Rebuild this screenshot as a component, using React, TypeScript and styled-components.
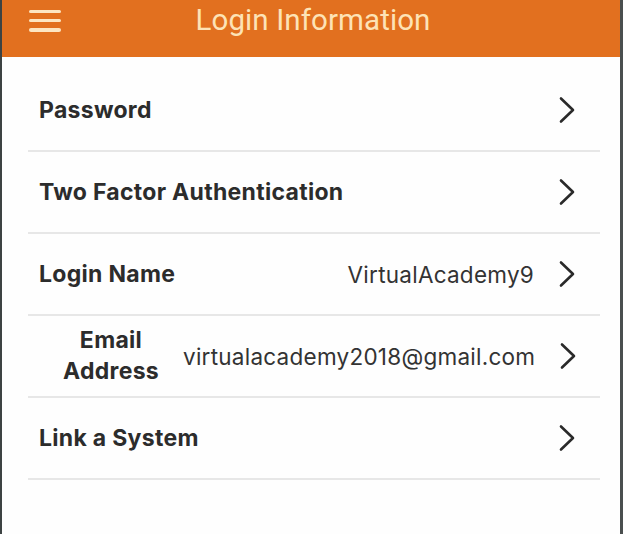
import React from 'react';
import styled, { createGlobalStyle } from 'styled-components';

const GlobalStyle = createGlobalStyle`
  html, body {
    margin: 0;
    padding: 0;
    background: #ffffff;
  }
  body {
    font-family: Inter, "Liberation Sans", Arial, sans-serif;
  }
`;

const Screen = styled.div`
  width: 623px;
  height: 534px;
  box-sizing: border-box;
  border-left: 2px solid #3d4343;
  border-right: 3px solid #4a4f4f;
  background: #fefefe;
  display: flex;
  flex-direction: column;
`;

const Header = styled.header`
  height: 57px;
  flex-shrink: 0;
  background: #e2701f;
  display: grid;
  grid-template-columns: 1fr auto 1fr;
  align-items: center;
`;

const MenuButton = styled.button`
  justify-self: start;
  margin: 0 0 16px 27px;
  padding: 0;
  border: none;
  background: none;
  width: 32px;
  height: 22px;
  display: flex;
  flex-direction: column;
  justify-content: space-between;
`;

const MenuBar = styled.span`
  display: block;
  height: 3.5px;
  border-radius: 2px;
  background: #fde6c2;
`;

const Title = styled.h1`
  margin: 0 0 18px 4px;
  font-family: Roboto, "Liberation Sans", sans-serif;
  font-weight: 400;
  font-size: 29.5px;
  color: #fde3b6;
  letter-spacing: 0.1px;
`;

const List = styled.ul`
  list-style: none;
  margin: 0;
  padding: 13px 20px 0 26px;
`;

const Row = styled.li`
  height: 82px;
  box-sizing: border-box;
  border-bottom: 2px solid #e7e7e7;
  display: flex;
  align-items: center;
  padding: 0 24px 0 11px;
  color: #2c2c2c;
`;

const Label = styled.span<{ $stacked?: boolean }>`
  font-weight: 700;
  font-size: 23px;
  letter-spacing: 0.3px;
  line-height: 31px;
  flex-shrink: 0;
  ${(p) => (p.$stacked ? 'width: 144px; text-align: center;' : '')}
`;

const Trailing = styled.div`
  margin-left: auto;
  display: flex;
  align-items: center;
  gap: 24px;
`;

const Value = styled.span`
  font-size: 22.5px;
  font-weight: 400;
  letter-spacing: 0.25px;
  color: #333;
  white-space: nowrap;
`;

const Chevron = styled.svg`
  width: 18px;
  height: 28px;
  flex-shrink: 0;
`;

const Arrow = () => (
  <Chevron viewBox="0 0 18 28">
    <polyline
      points="3,2.5 15,14 3,25.5"
      fill="none"
      stroke="#2a2a2a"
      strokeWidth="2.6"
      strokeLinecap="round"
      strokeLinejoin="round"
    />
  </Chevron>
);

const rows = [
  { label: 'Password' },
  { label: 'Two Factor Authentication' },
  { label: 'Login Name', value: 'VirtualAcademy9' },
  { label: 'Email Address', value: 'virtualacademy2018@gmail.com', stacked: true },
  { label: 'Link a System' },
];

export default function App() {
  return (
    <>
      <GlobalStyle />
      <Screen>
        <Header>
          <MenuButton aria-label="Menu">
            <MenuBar />
            <MenuBar />
            <MenuBar />
          </MenuButton>
          <Title>Login Information</Title>
        </Header>
        <List>
          {rows.map((r) => (
            <Row key={r.label}>
              <Label $stacked={r.stacked}>{r.label}</Label>
              <Trailing>
                {r.value && <Value>{r.value}</Value>}
                <Arrow />
              </Trailing>
            </Row>
          ))}
        </List>
      </Screen>
    </>
  );
}
